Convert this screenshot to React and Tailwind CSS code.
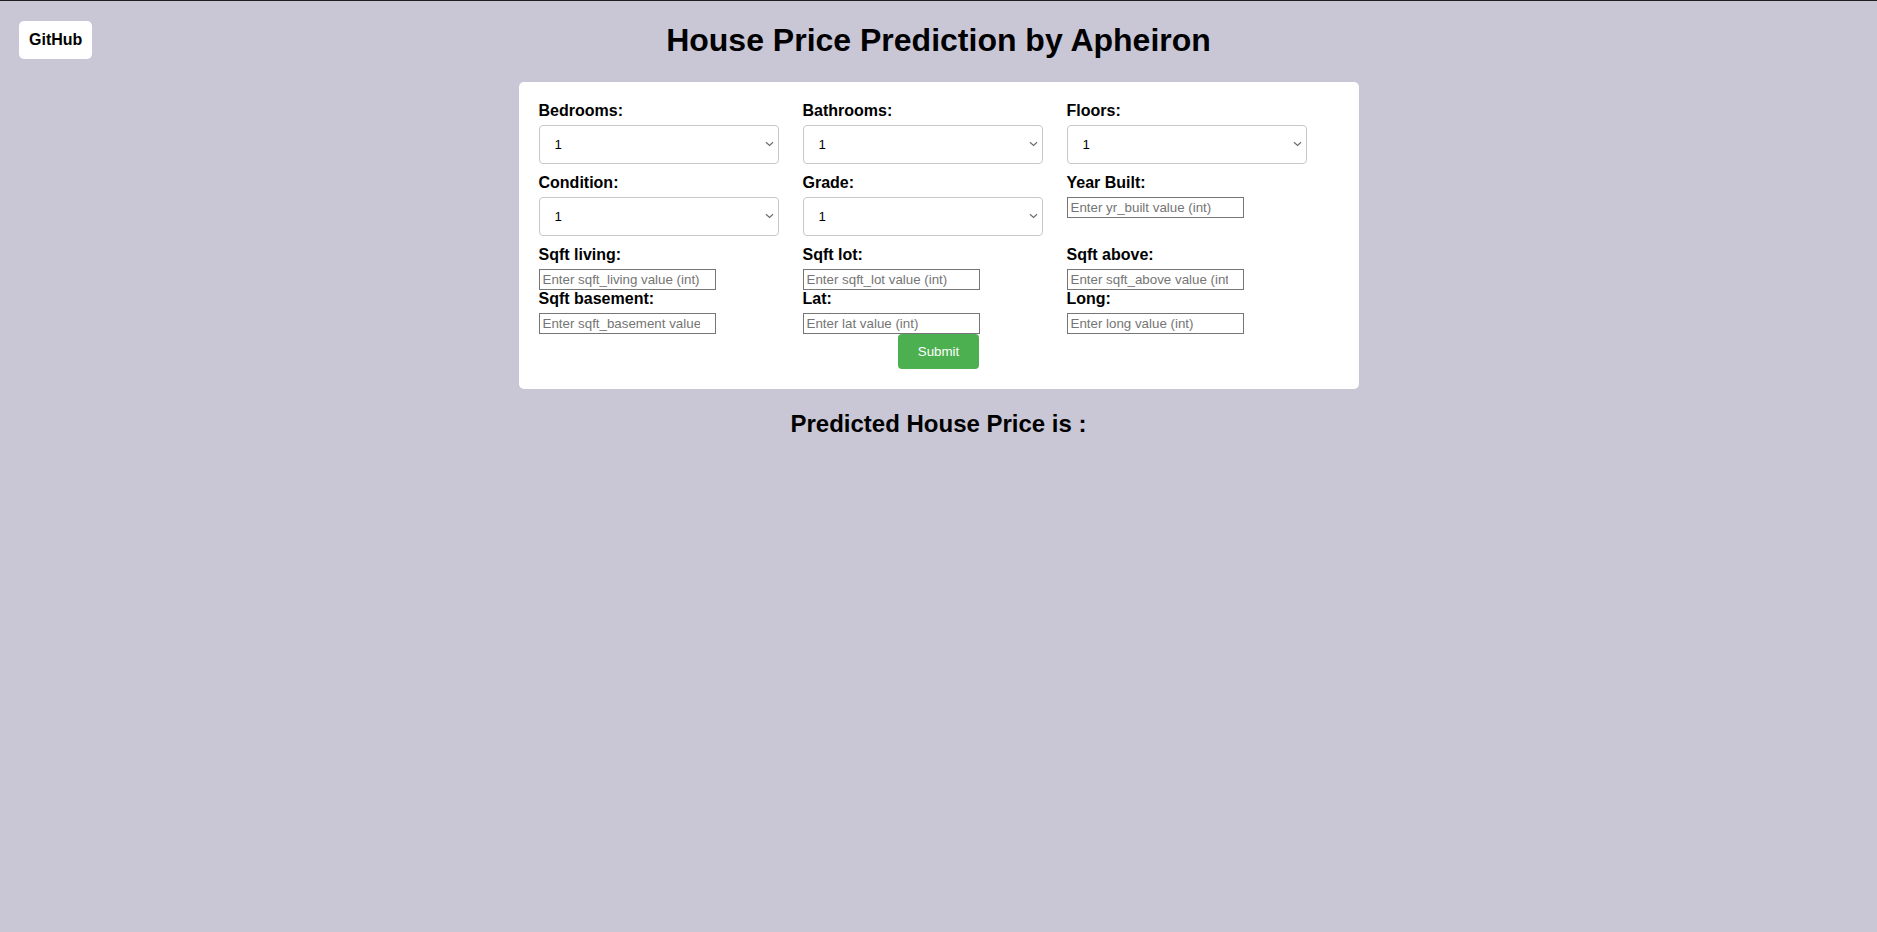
import React from "react";

function Chevron() {
  return (
    <svg
      className="absolute right-[5px] top-[16px] pointer-events-none"
      width="9"
      height="6"
      viewBox="0 0 9 6"
      fill="none"
    >
      <path d="M1 1.2 L4.5 4.4 L8 1.2" stroke="#6d6d6d" strokeWidth="1.2" />
    </svg>
  );
}

function SelectField({ label }) {
  return (
    <div className="w-[33%]">
      <label className="block font-bold text-[16px] leading-[18px] mb-[5px] text-black">{label}</label>
      <div className="relative w-[240px] h-[39px] mb-[10px]">
        <select className="appearance-none w-full h-full border border-[#c8c8c8] rounded-[4px] pl-[15px] text-[13.33px] text-black bg-white outline-none">
          <option>1</option>
          <option>2</option>
          <option>3</option>
        </select>
        <Chevron />
      </div>
    </div>
  );
}

function InputField({ label, placeholder }) {
  return (
    <div className="w-[33%]">
      <label className="block font-bold text-[16px] leading-[18px] mb-[5px] text-black">{label}</label>
      <input
        type="text"
        placeholder={placeholder}
        className="block w-[177px] h-[21px] border border-[#767676] pl-[3px] pr-[15px] text-[13.33px] leading-[15px] text-black bg-white placeholder:text-[#757575] outline-none"
      />
    </div>
  );
}

export default function App() {
  return (
    <div className="relative min-h-screen bg-[#c9c7d5] border-t border-[#1e1e1e] font-['Liberation_Sans',Arial,sans-serif] text-black">
      <a
        href="#"
        className="absolute left-[19px] top-[20px] bg-white rounded-[5px] p-[10px] font-bold text-[16px] leading-[18px] text-black"
      >
        GitHub
      </a>
      <h1 className="pt-[21px] text-center font-bold text-[32px] leading-[37px]">
        House Price Prediction by Apheiron
      </h1>
      <div className="mx-auto mt-[23px] w-[840px] bg-white rounded-[5px] p-[20px]">
        <div className="flex flex-wrap">
          <SelectField label="Bedrooms:" />
          <SelectField label="Bathrooms:" />
          <SelectField label="Floors:" />
          <SelectField label="Condition:" />
          <SelectField label="Grade:" />
          <InputField label="Year Built:" placeholder="Enter yr_built value (int)" />
          <InputField label="Sqft living:" placeholder="Enter sqft_living value (int)" />
          <InputField label="Sqft lot:" placeholder="Enter sqft_lot value (int)" />
          <InputField label="Sqft above:" placeholder="Enter sqft_above value (int)" />
          <InputField label="Sqft basement:" placeholder="Enter sqft_basement value (int)" />
          <InputField label="Lat:" placeholder="Enter lat value (int)" />
          <InputField label="Long:" placeholder="Enter long value (int)" />
        </div>
        <button
          type="button"
          className="block mx-auto w-[81px] h-[35px] bg-[#4caf50] text-white rounded-[4px] text-[13.33px]"
        >
          Submit
        </button>
      </div>
      <h2 className="mt-[21px] text-center font-bold text-[24px] leading-[28px]">
        Predicted House Price is :
      </h2>
    </div>
  );
}
